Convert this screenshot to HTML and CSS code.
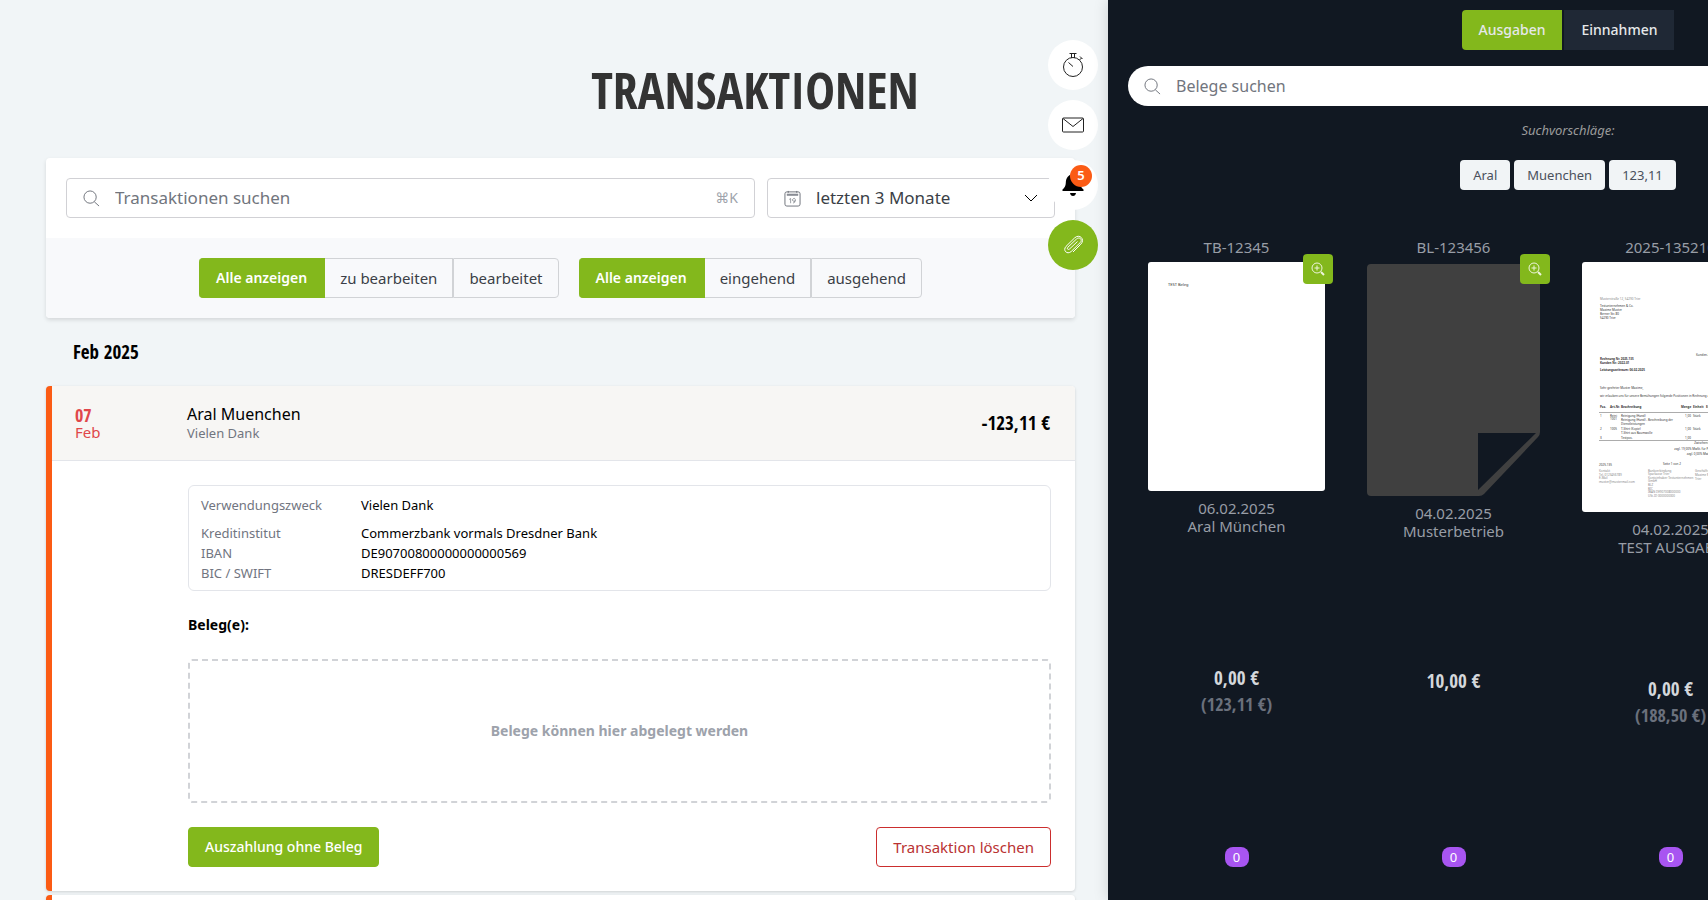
FILE: index.html
```
<!DOCTYPE html>
<html lang="de">
<head>
    <meta charset="utf-8">
    <meta name="viewport" content="width=device-width, initial-scale=1">
    <title>Transaktionen</title>
    <link rel="stylesheet" href="styles.css">
</head>
<body>
<div class="app">
    <main class="content">
        <header class="page-header">
            <h1>TRANSAKTIONEN</h1>
        </header>

        <section class="filter-card">
            <form class="filter-search">
                <label class="field field-search">
                    <svg class="icon" viewBox="0 0 18 18"><circle cx="7.5" cy="7.5" r="6.5"/><path d="M12 12.5l5 4.500"/></svg>
                    <input type="text" placeholder="Transaktionen suchen" aria-label="Transaktionen suchen">
                    <kbd>⌘K</kbd>
                </label>
                <label class="field field-range">
                    <svg class="icon" viewBox="0 0 18 18"><rect x="1" y="2" width="16" height="15" rx="2"/><path d="M3 4.500h12M3 5.500h12M4.500 1v2M13.500 1v2"/><path class="thin" d="M5.500 10l1.500-1v5M12 10.800a1.500 1.500 0 1 1 0-.6q.2 3.500-2.500 3.700"/></svg>
                    <select aria-label="Zeitraum">
                        <option>letzten 3 Monate</option>
                        <option>letzten 6 Monate</option>
                    </select>
                    <svg class="chevron" viewBox="0 0 14 8"><path d="M1 1l6 6 6-6"/></svg>
                </label>
            </form>
            <div class="filter-bar">
                <div class="button-group">
                    <button type="button" class="active">Alle anzeigen</button>
                    <button type="button">zu bearbeiten</button>
                    <button type="button">bearbeitet</button>
                </div>
                <div class="button-group">
                    <button type="button" class="active">Alle anzeigen</button>
                    <button type="button">eingehend</button>
                    <button type="button">ausgehend</button>
                </div>
            </div>
        </section>

        <h2 class="month">Feb 2025</h2>

        <article class="transaction">
            <div class="transaction-head">
                <div class="date"><strong>07</strong><span>Feb</span></div>
                <div class="partner">
                    <h3>Aral Muenchen</h3>
                    <p>Vielen Dank</p>
                </div>
                <div class="amount">-123,11 €</div>
            </div>
            <div class="transaction-body">
                <table class="details">
                    <tr class="purpose"><th scope="row">Verwendungszweck</th><td>Vielen Dank</td></tr>
                    <tr><th scope="row">Kreditinstitut</th><td>Commerzbank vormals Dresdner Bank</td></tr>
                    <tr><th scope="row">IBAN</th><td>DE90700800000000000569</td></tr>
                    <tr><th scope="row">BIC / SWIFT</th><td>DRESDEFF700</td></tr>
                </table>
                <h4>Beleg(e):</h4>
                <div class="dropzone">Belege können hier abgelegt werden</div>
                <div class="actions">
                    <button type="button" class="btn btn-primary">Auszahlung ohne Beleg</button>
                    <button type="button" class="btn btn-danger">Transaktion löschen</button>
                </div>
            </div>
        </article>
        <article class="transaction next"></article>

        <nav class="quick-actions">
            <button type="button" aria-label="Zeiterfassung">
                <svg width="22" height="26" viewBox="0 0 22 26"><circle cx="11" cy="15" r="9.500"/><path d="M7.500 1.500h7M9.500 1.500V6M12.500 1.500V6M17.500 8l2-2M18 4.500l2.500 2.500M6.500 10.500l4.500 4"/></svg>
            </button>
            <button type="button" aria-label="Nachrichten">
                <svg width="24" height="18" viewBox="0 0 24 18"><rect x="1.500" y="2" width="21" height="14" rx="1"/><path d="M2 2.500l10 8 10-8"/></svg>
            </button>
            <button type="button" aria-label="Benachrichtigungen">
                <svg class="bell" width="22" height="22" viewBox="0 0 22 22"><path d="M11 0c-5 .8-7 4-7.200 9-.1 3-1.300 5-3.300 6.500V17h21v-1.500C19.500 14 18.300 12 18.200 9 18 4 16 .8 11 0zM8 19h6q-.5 3-3 3t-3-3z"/></svg>
                <span class="badge">5</span>
            </button>
            <button type="button" class="active" aria-label="Belege">
                <svg width="22" height="22" viewBox="0 0 22 22"><path d="M15.500 7.500l-8 7.500c-1.300 1.200-3-.3-1.700-1.700l8.700-8.300c3-2.700 6.500.7 3.700 3.600l-9 8.900c-4.200 3.600-8.700-1.200-5.200-5.100L12.500 4c5-4.800 11 1.400 6.300 6.200L11 18"/></svg>
            </button>
        </nav>
    </main>

    <aside class="drawer">
        <div class="tabs">
            <button type="button" class="active">Ausgaben</button>
            <button type="button">Einnahmen</button>
        </div>
        <label class="drawer-search">
            <svg class="icon" viewBox="0 0 18 18"><circle cx="7.500" cy="7.500" r="6.500"/><path d="M12 12.500l5 4.500"/></svg>
            <input type="text" placeholder="Belege suchen" aria-label="Belege suchen">
        </label>
        <p class="hint">Suchvorschläge:</p>
        <div class="chips">
            <button type="button">Aral</button>
            <button type="button">Muenchen</button>
            <button type="button">123,11</button>
        </div>

        <div class="receipts">
            <article class="receipt">
                <div class="receipt-info">
                    <span class="number">TB-12345</span>
                    <div class="thumb">
                        <svg class="page" viewBox="0 0 177 229"><text x="20" y="24" font-size="4">TEST Beleg</text></svg>
                        <button type="button" class="zoom" aria-label="Vergrößern"><svg width="14" height="14" viewBox="0 0 14 14"><circle cx="6" cy="6" r="5"/><path d="M6 3.500v5M3.500 6h5"/><path class="thick" d="M10 10l3 3"/></svg></button>
                    </div>
                    <span>06.02.2025</span>
                    <span>Aral München</span>
                </div>
                <div class="sums"><b>0,00 €</b><i>(123,11 €)</i></div>
                <span class="count">0</span>
            </article>

            <article class="receipt">
                <div class="receipt-info">
                    <span class="number">BL-123456</span>
                    <div class="thumb">
                        <svg class="empty" viewBox="0 0 177 234"><path fill-rule="evenodd" d="M6 2H171q4 0 4 4V170q0 3-2 5L119 232q-2 2-5 2H6q-4 0-4-4V6q0-4 4-4zM113 171V228L171 171z"/></svg>
                        <button type="button" class="zoom" aria-label="Vergrößern"><svg width="14" height="14" viewBox="0 0 14 14"><circle cx="6" cy="6" r="5"/><path d="M6 3.500v5M3.500 6h5"/><path class="thick" d="M10 10l3 3"/></svg></button>
                    </div>
                    <span>04.02.2025</span>
                    <span>Musterbetrieb</span>
                </div>
                <div class="sums"><b>10,00 €</b></div>
                <span class="count">0</span>
            </article>

            <article class="receipt">
                <div class="receipt-info">
                    <span class="number">2025-135210</span>
                    <div class="thumb">
                        <svg class="page" viewBox="0 0 177 250" font-size="3">
                            <g class="faint">
                                <text x="18" y="38">Musterstraße 12, 54290 Trier</text>
                                <text x="17" y="210">Kontakt</text>
                                <text x="17" y="214">Tel. 0123456789</text>
                                <text x="17" y="217">E-Mail</text>
                                <text x="17" y="221">muster@mustermail.com</text>
                                <text x="66" y="210">Bankverbindung</text>
                                <text x="66" y="213">Sparkasse Trier</text>
                                <text x="66" y="217">Kontoinhaber Testunternehmen</text>
                                <text x="66" y="220">GmbH</text>
                                <text x="66" y="224">BLZ</text>
                                <text x="66" y="228">BIC</text>
                                <text x="66" y="231">IBAN DE907008000000</text>
                                <text x="66" y="235">USt-ID 0000000000</text>
                                <text x="113" y="210">Geschäftsführer</text>
                                <text x="113" y="214">Maxime Muster</text>
                                <text x="113" y="218">Trier</text>
                            </g>
                            <text x="18" y="45">Testunternehmen &amp; Co.</text>
                            <text x="18" y="49">Maxime Muster</text>
                            <text x="18" y="53">Berner Str. 80</text>
                            <text x="18" y="57">54290 Trier</text>
                            <text x="114" y="94">Kunden-Nr.</text>
                            <g class="strong">
                                <text x="18" y="98">Rechnung Nr. 2025-135</text>
                                <text x="18" y="102">Kunden Nr.: 2022-01</text>
                                <text x="18" y="109">Leistungszeitraum: 06.02.2025</text>
                                <text x="18" y="146">Pos.</text>
                                <text x="28" y="146">Art-Nr.</text>
                                <text x="39" y="146">Beschreibung</text>
                                <text x="99" y="146">Menge</text>
                                <text x="111" y="146">Einheit</text>
                                <text x="124" y="146">Einzelpreis</text>
                            </g>
                            <text x="18" y="127">Sehr geehrter Muster Maxime,</text>
                            <text x="18" y="135">wir erlauben uns für unsere Bemühungen folgende Positionen in Rechnung zu stellen</text>
                            <path d="M17 150.500h146M17 178.500h146"/>
                            <text x="18" y="155">1</text><text x="28" y="155">Reini</text><text x="28" y="158">1001</text>
                            <text x="39" y="155">Reinigung (Hand)</text>
                            <text x="39" y="159">Reinigung (Hand) - Beschreibung der</text>
                            <text x="39" y="163">Dienstleistungen</text>
                            <text x="103" y="155">1,00</text><text x="111" y="155">Stück</text>
                            <text x="18" y="168">2</text><text x="28" y="168">1005</text>
                            <text x="39" y="168">T-Shirt (Kopie)</text><text x="39" y="172">T-Shirt aus Baumwolle</text>
                            <text x="103" y="168">1,00</text><text x="111" y="168">Stück</text>
                            <text x="18" y="177">3</text><text x="39" y="177">Testpos.</text><text x="103" y="177">1,00</text>
                            <g text-anchor="end">
                                <text x="136" y="182">Zwischensumme</text>
                                <text x="162" y="188">zzgl. 19,00% MwSt. für Positionen 1, 2, 3, 150,00 €</text>
                                <text x="162" y="193">zzgl. 0,00% MwSt. für Positionen, 38,50 €</text>
                            </g>
                            <text x="17" y="204">2025-135</text><text x="81" y="203">Seite 1 von 2</text>
                        </svg>
                        <button type="button" class="zoom" aria-label="Vergrößern"><svg width="14" height="14" viewBox="0 0 14 14"><circle cx="6" cy="6" r="5"/><path d="M6 3.500v5M3.500 6h5"/><path class="thick" d="M10 10l3 3"/></svg></button>
                    </div>
                    <span>04.02.2025</span>
                    <span>TEST AUSGABE</span>
                </div>
                <div class="sums"><b>0,00 €</b><i>(188,50 €)</i></div>
                <span class="count">0</span>
            </article>
        </div>
    </aside>
</div>
</body>
</html>
```
FILE: styles.css
```
* {
    box-sizing: border-box;
}
body {
    margin: 0;
    overflow: hidden;
    background: #f1f5f7;
    color: #000;
    font: 16px/24px "Noto Sans", "Open Sans", sans-serif;
}
h1, h2, h3, h4, p {
    margin: 0;
    font-weight: normal;
}
button, input, select {
    font: inherit;
    color: inherit;
    margin: 0;
}
button {
    cursor: pointer;
    padding: 0;
    border: none;
}
svg {
    display: block;
    fill: none;
    stroke: currentColor;
}
.app {
    display: flex;
    height: 100vh;
    overflow: hidden;
}

/* left side */
.content {
    position: relative;
    flex: 1 1 0;
    min-width: 0;
    padding: 0 33px 0 46px;
    overflow: hidden;
}
.page-header {
    display: flex;
    align-items: center;
    justify-content: center;
    height: 158px;
    padding: 22px 0 0 389px;
}
h1 {
    font: 800 50px/60px "Open Sans Condensed", "Roboto Condensed", sans-serif;
    color: #333;
}
.filter-card {
    background: #fff;
    border-radius: 4px;
    box-shadow: 0 2px 4px rgba(0, 0, 0, .12);
}
.filter-search {
    display: flex;
    gap: 12px;
    padding: 20px;
}
.field {
    display: flex;
    align-items: center;
    height: 40px;
    padding: 0 16px;
    border: 1px solid #d1d1d5;
    border-radius: 4px;
    color: #71757d;
}
.field-search {
    flex: 1;
}
.field-range {
    width: 288px;
    color: #3b3f47;
}
.icon {
    flex: none;
    width: 17px;
    height: 17px;
    margin-right: 15px;
    color: #6b7078;
}
.icon .thin {
    stroke-width: .7;
}
.field input, .field select {
    flex: 1;
    min-width: 0;
    padding: 0;
    border: none;
    outline: none;
    background: none;
    font-size: 17px;
}
.field select {
    appearance: none;
}
::placeholder {
    color: #71757d;
    opacity: 1;
}
kbd {
    font: 14px/20px "Noto Sans", "DejaVu Sans", sans-serif;
    color: #9ea3ab;
}
.chevron {
    width: 14px;
    height: 8px;
    color: #000;
}
.filter-bar {
    display: flex;
    justify-content: center;
    gap: 20px;
    padding: 20px;
    background: #f8f9fb;
    border-radius: 0 0 4px 4px;
}
.button-group {
    display: flex;
}
.button-group button {
    height: 40px;
    padding: 0 15px;
    border: 1px solid #d1d3d6;
    border-left-width: 0;
    background: #f8f9fb;
    color: #3b3f47;
    font-size: 15px;
    white-space: nowrap;
}
.button-group button:last-child {
    border-left-width: 1px;
    border-radius: 0 4px 4px 0;
}
.button-group .active {
    padding: 0 17px;
    background: #83b81c;
    border-color: #83b81c;
    border-radius: 4px 0 0 4px;
    color: #fff;
    font-size: 14px;
    font-weight: 600;
}
.month {
    padding: 22px 0 22px 27px;
    font: 800 19px/24px "Open Sans Condensed", "Roboto Condensed", sans-serif;
}
.transaction {
    border-left: 6px solid #fb5b14;
    border-radius: 4px;
    background: #fff;
    box-shadow: 0 1px 3px rgba(0, 0, 0, .15);
    margin-bottom: 4px;
    overflow: hidden;
}
.transaction.next {
    height: 40px;
}
.transaction-head {
    display: flex;
    align-items: center;
    height: 75px;
    padding: 0 25px 0 23px;
    background: #f7f6f4;
    border-bottom: 1px solid #e3e5ea;
}
.date {
    display: flex;
    flex-direction: column;
    width: 112px;
    color: #e0474a;
    font-size: 15px;
    line-height: 16px;
}
.date strong {
    font: 800 18px/17px "Open Sans Condensed", "Roboto Condensed", sans-serif;
}
.partner {
    flex: 1;
}
.partner h3 {
    font-size: 16px;
    line-height: 20px;
}
.partner p {
    color: #71757f;
    font-size: 13px;
    line-height: 19px;
}
.amount {
    font: 800 19px/24px "Open Sans Condensed", "Roboto Condensed", sans-serif;
}
.transaction-body {
    padding: 24px 24px 24px 136px;
}
.details {
    display: block;
    padding: 8px 12px 7px;
    border: 1px solid #e3e5ea;
    border-radius: 6px;
    border-spacing: 0;
    font-size: 13px;
    line-height: 20px;
}
.details th {
    width: 160px;
    padding: 0;
    color: #71757f;
    font-weight: normal;
    text-align: left;
}
.details td {
    padding: 0;
}
.details .purpose > * {
    padding: 1px 0 8px;
}
h4 {
    padding: 22px 0;
    font-size: 14px;
    line-height: 24px;
    font-weight: bold;
}
.dropzone {
    display: flex;
    align-items: center;
    justify-content: center;
    height: 144px;
    border: 2px dashed #d1d3d7;
    border-radius: 4px;
    color: #9da2ab;
    font-size: 14px;
    font-weight: bold;
}
.actions {
    display: flex;
    justify-content: space-between;
    padding-top: 24px;
}
.btn {
    height: 40px;
    padding: 0 16px;
    border: 1px solid;
    border-radius: 4px;
    font-size: 14px;
    font-weight: 500;
}
.btn-primary {
    background: #83b81c;
    border-color: #83b81c;
    color: #fff;
}
.btn-danger {
    background: #fff;
    border-color: #cb2e2e;
    color: #b93232;
    font-size: 15px;
    font-weight: normal;
}

/* round buttons floating over the list */
.quick-actions {
    position: absolute;
    top: 40px;
    right: 10px;
    display: flex;
    flex-direction: column;
    gap: 10px;
}
.quick-actions button {
    position: relative;
    display: flex;
    align-items: center;
    justify-content: center;
    width: 50px;
    height: 50px;
    border-radius: 50%;
    background: #fff;
    color: #222;
}
.quick-actions .active {
    background: #83b81c;
    color: #fff;
}
.quick-actions .bell {
    fill: #000;
    stroke: none;
}
.badge {
    position: absolute;
    top: 5px;
    left: 22px;
    width: 22px;
    height: 22px;
    border-radius: 50%;
    background: #fb5b14;
    color: #fff;
    font-size: 13px;
    line-height: 20px;
    font-weight: 600;
}

/* receipts drawer, wider than the visible part */
.drawer {
    display: flex;
    flex-direction: column;
    align-items: center;
    width: 920px;
    flex: none;
    margin-right: -320px;
    padding: 10px 20px 33px;
    background: #111822;
    box-shadow: 0 0 14px rgba(0, 0, 0, .15);
    z-index: 1;
}
.tabs {
    display: flex;
    gap: 2px;
}
.tabs button {
    height: 40px;
    padding: 0 17px;
    background: #1f2835;
    color: #e6e8ea;
    font-size: 14px;
    font-weight: 500;
}
.tabs .active {
    background: #83b81c;
    border-radius: 4px 0 0 4px;
}
.drawer-search {
    display: flex;
    align-items: center;
    width: 100%;
    height: 40px;
    margin-top: 16px;
    padding: 0 16px;
    border-radius: 20px;
    background: #fff;
}
.drawer-search input {
    flex: 1;
    border: none;
    outline: none;
    background: none;
    padding: 0;
    color: #71757d;
}
.hint {
    margin-top: 14px;
    color: #9b9b9b;
    font-size: 13px;
    line-height: 20px;
    font-style: italic;
}
.chips {
    display: flex;
    gap: 4px;
    margin-top: 20px;
}
.chips button {
    height: 30px;
    padding: 0 13px;
    border-radius: 4px;
    background: #f1f4f6;
    color: #4a505c;
    font-size: 13px;
}
.receipts {
    flex: 1;
    display: grid;
    grid-template-columns: repeat(4, 1fr);
    width: 100%;
    margin-top: 48px;
    padding-right: 12px;
}
.receipt {
    display: flex;
    flex-direction: column;
    align-items: center;
    justify-content: space-between;
}
.receipt-info {
    display: flex;
    flex-direction: column;
    align-items: center;
    color: #989da6;
    font-size: 15px;
    line-height: 18px;
}
.thumb {
    position: relative;
    width: 177px;
    margin: 6px 0 8px;
}
.page {
    background: #fff;
    border-radius: 3px;
    fill: #333;
    stroke: none;
}
.page path {
    stroke: #888;
    stroke-width: .7;
}
.page .faint {
    fill: #888;
}
.page .strong {
    font-weight: bold;
}
.empty {
    fill: #404040;
    stroke: none;
}
.zoom {
    position: absolute;
    top: -8px;
    right: -8px;
    display: flex;
    align-items: center;
    justify-content: center;
    width: 30px;
    height: 30px;
    border-radius: 4px;
    background: #83b81c;
    color: #eef5dc;
}
.zoom .thick {
    stroke-width: 2;
}
.sums {
    display: flex;
    flex-direction: column;
    align-items: center;
    min-height: 52px;
    font: 800 19px/26px "Open Sans Condensed", "Roboto Condensed", sans-serif;
    color: #d4d7db;
}
.sums b, .sums i {
    font-style: normal;
    font-weight: inherit;
}
.sums i {
    color: #6a707c;
    font-size: 18px;
}
.count {
    width: 24px;
    height: 20px;
    border-radius: 8px;
    background: #a855f1;
    color: #fff;
    font-size: 13px;
    line-height: 20px;
    text-align: center;
}
```
